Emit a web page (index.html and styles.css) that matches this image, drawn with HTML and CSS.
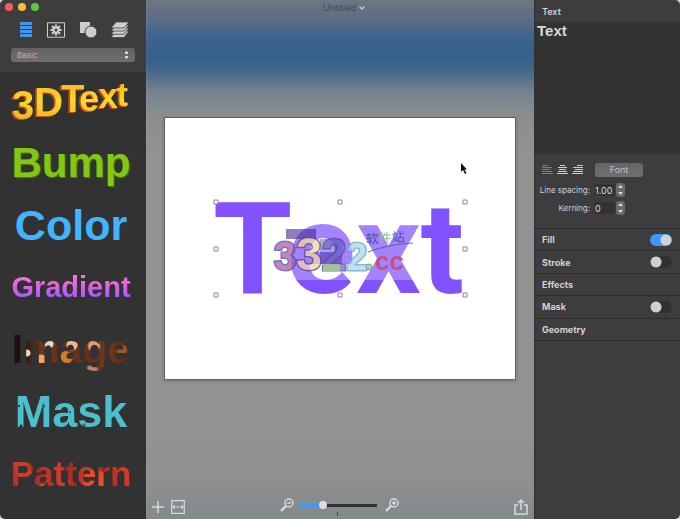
FILE: index.html
```
<!DOCTYPE html>
<html lang="en">
<head>
  <meta charset="UTF-8" />
  <meta name="viewport" content="width=device-width, initial-scale=1.0"/>
  <title>Untitled</title>
  <link rel="stylesheet" href="styles.css">
</head>
<body>
  <div class="window">

    <aside class="sidebar">
      <div class="sidebar-top">
        <div class="lights">
          <button class="light close" aria-label="Close"></button>
          <button class="light minimize" aria-label="Minimize"></button>
          <button class="light full" aria-label="Full screen"></button>
        </div>
        <nav class="tabs">
          <button aria-label="Styles">
            <svg width="14" height="16" viewBox="0 0 14 16" fill="#4496e8"><path d="M1 0h12v3H1zM1 4h12v3H1zM1 8h12v3H1zM1 12h12v3H1z"/></svg>
          </button>
          <button aria-label="Symbols">
            <svg width="18" height="16" viewBox="0 0 18 16" fill="none" stroke="#d0d0d0"><path d="M.5 .8h17v14.4H.5z"/><path stroke-width="2.2" d="M9 2.500v3M9 10.500v3M3.500 8h3M11.500 8h3M5.100 4.100l2.100 2.100M10.800 9.800l2.100 2.100M12.900 4.100l-2.100 2.100M7.200 9.800l-2.100 2.100"/><circle cx="9" cy="8" r="2.500" stroke-width="2"/></svg>
          </button>
          <button aria-label="Shapes">
            <svg width="18" height="16" viewBox="0 0 18 16" fill="#cdcdcd"><path d="M1 0h10v11H1z"/><circle cx="12" cy="10" r="6" stroke="#3d3d3d"/></svg>
          </button>
          <button aria-label="Layers">
            <svg width="18" height="16" viewBox="0 0 18 16" fill="#d0d0d0" stroke="#3d3d3d" stroke-width=".8"><path d="M5 9h13l-5 6.500H0z"/><path d="M5 6h13l-5 6.200H0z"/><path d="M5 3h13l-5 6H0z"/><path d="M5 0h13l-5 6H0z"/></svg>
          </button>
        </nav>
        <select class="category" aria-label="Category">
          <option>Basic</option>
        </select>
      </div>

      <div class="presets">
        <button class="preset">
          <svg width="124" height="60" viewBox="0 0 124 60" aria-label="3DText">
            <defs>
              <linearGradient id="gold" x1="0" y1="0" x2="0" y2="1">
                <stop offset="0" stop-color="#f6a81e"/>
                <stop offset=".5" stop-color="#fcd82b"/>
                <stop offset="1" stop-color="#f9a51d"/>
              </linearGradient>
            </defs>
            <text class="solid" x="3" y="48" fill="url(#gold)"><tspan font-size="40">3</tspan><tspan font-size="40" dy="-3">D</tspan><tspan font-size="38" dx="-2" dy="-4">T</tspan><tspan font-size="36" dx="-5" dy="-1">e</tspan><tspan font-size="35" dx="-1" dy="-3">x</tspan><tspan font-size="34" dx="-1" dy="-2">t</tspan></text>
          </svg>
        </button>
        <button class="preset bump">Bump</button>
        <button class="preset color">Color</button>
        <button class="preset gradient">Gradient</button>
        <button class="preset image">Image</button>
        <button class="preset mask">Mask</button>
        <button class="preset pattern">Pattern</button>
      </div>
    </aside>

    <main class="workspace">
      <header class="title">
        <span>Untitled</span>
        <svg width="6" height="4" viewBox="0 0 6 4" fill="none" stroke="#c3ced8" stroke-width="1.300"><path d="M.5 .5L3 3 5.500 .5"/></svg>
      </header>

      <div class="stage">
        <svg class="canvas" viewBox="0 0 350 261">
          <text class="artwork" x="48" y="175">Text</text>

          <!-- watermark -->
          <path class="haze" d="M126 100h129v62H126z"/>
          <path fill="#3d2b91" opacity=".6" d="M121 111h30v10h-30z"/>
          <path fill="#2c1f9a" opacity=".4" d="M155 121h22v25h-22z"/>
          <text class="digits" x="109" y="152"><tspan font-size="40" fill="#ae5db0">3</tspan><tspan font-size="46" fill="#f3d6a6">3</tspan><tspan font-size="44" fill="#756bd2">2</tspan><tspan font-size="38" stroke="#7398c2" fill="#a2d9ee">2</tspan></text>
          <path fill="#a5cf91" opacity=".8" d="M158 146h17v7h-17z"/>
          <circle cx="204" cy="149" r="3" fill="#a9d6a2" stroke="#8696b0"/>
          <text class="domain" x="210" y="152">cc</text>
          <g transform="rotate(-4 202 126)">
            <text class="hanzi" x="201" y="126">软<tspan fill="#87c58f">件</tspan>站</text>
          </g>
          <path d="M203 134Q224 126 248 125" fill="none" stroke="#46549b" stroke-width=".8"/>

          <g class="handles">
            <path d="M49 82h4v4h-4zM173 82h4v4h-4zM298 82h4v4h-4zM49 129h4v4h-4zM298 129h4v4h-4zM49 175h4v4h-4zM173 175h4v4h-4zM298 175h4v4h-4z"/>
          </g>
          <path d="M296 45v9l2-2 2 4 1.500-.7-2-3.800h2.500z" fill="#111"/>
        </svg>
      </div>

      <footer class="bottom-bar">
        <button aria-label="Add">
          <svg width="12" height="12" viewBox="0 0 12 12"><path d="M6 0v12M0 6h12"/></svg>
        </button>
        <button aria-label="Fit canvas">
          <svg width="14" height="14" viewBox="0 0 14 14"><path stroke-width="1.200" d="M.7 .7h12.600v12.600H.7zM1 7h3M10 7h3M4 5.500L2 7l2 1.500M10 5.500L12 7l-2 1.500M5 7h4"/></svg>
        </button>
        <div class="zoom">
          <button aria-label="Zoom out">
            <svg width="14" height="14" viewBox="0 0 14 14"><circle cx="9" cy="5" r="4"/><path d="M7 5h4"/><path d="M6 8L1 13" stroke-width="2.400"/></svg>
          </button>
          <div class="scale">
            <input type="range" min="0" max="100" value="28" aria-label="Zoom">
            <i class="tick"></i>
          </div>
          <button aria-label="Zoom in">
            <svg width="14" height="14" viewBox="0 0 14 14"><circle cx="9" cy="5" r="4"/><path d="M7 5h4M9 3v4"/><path d="M6 8L1 13" stroke-width="2.400"/></svg>
          </button>
        </div>
        <button aria-label="Share">
          <svg width="14" height="16" viewBox="0 0 14 16"><path d="M4 6H1v9h12V6h-3M7 11V1M4 4l3-3 3 3"/></svg>
        </button>
      </footer>
    </main>

    <aside class="inspector">
      <h1>Text</h1>
      <textarea aria-label="Text content" spellcheck="false">Text</textarea>

      <div class="type">
        <div class="type-row">
          <div class="align">
            <button aria-label="Align left"><svg width="11" height="9" viewBox="0 0 11 9" stroke="#438bd4"><path d="M0 .5h6M0 2.500h10M0 4.500h8M0 6.500h10M0 8.500h11"/></svg></button>
            <button aria-label="Align center"><svg width="11" height="9" viewBox="0 0 11 9" stroke="#ccc"><path d="M3 .5h5M1 2.500h9M2 4.500h7M1 6.500h9M0 8.500h11"/></svg></button>
            <button aria-label="Align right"><svg width="11" height="9" viewBox="0 0 11 9" stroke="#ccc"><path d="M5 .5h6M1 2.500h10M3 4.500h8M1 6.500h10M0 8.500h11"/></svg></button>
          </div>
          <button class="font">Font</button>
        </div>
        <div class="field">
          <label for="spacing">Line spacing:</label>
          <input type="text" id="spacing" value="1.00">
          <button class="stepper" aria-label="Change line spacing"><svg width="9" height="14" viewBox="0 0 9 14"><path d="M2 5l2.500-3L7 5zM2 9l2.500 3L7 9z"/></svg></button>
        </div>
        <div class="field">
          <label for="kerning">Kerning:</label>
          <input type="text" id="kerning" value="0">
          <button class="stepper" aria-label="Change kerning"><svg width="9" height="14" viewBox="0 0 9 14"><path d="M2 5l2.500-3L7 5zM2 9l2.500 3L7 9z"/></svg></button>
        </div>
      </div>

      <div class="sections">
        <div class="section"><label for="fill">Fill</label><input type="checkbox" id="fill" checked></div>
        <div class="section"><label for="stroke">Stroke</label><input type="checkbox" id="stroke"></div>
        <div class="section">Effects</div>
        <div class="section"><label for="mask">Mask</label><input type="checkbox" id="mask"></div>
        <div class="section">Geometry</div>
      </div>
    </aside>

  </div>
</body>
</html>
```
FILE: styles.css
```
* { box-sizing: border-box; }
body {
  margin: 0;
  font-family: Inter, "Liberation Sans", sans-serif;
  font-size: 9px;
  color: #d2d2d2;
  background: #d8d8d8;
}

button {
  padding: 0;
  border: none;
  background: none;
  font: inherit;
  color: inherit;
}

svg { display: block; }

.window {
  display: grid;
  grid-template-columns: 146px 1fr 146px;
  min-height: 100vh;
  border-radius: 5px;
  overflow: hidden;
}

/* Left sidebar */
.sidebar { background: #323232; }

.sidebar-top {
  height: 72px;
  padding: 3px 11px 0;
  background: #3d3d3d;
}

.lights {
  display: flex;
  gap: 5px;
  margin-left: -6px;
}

.light {
  width: 8px;
  height: 8px;
  border-radius: 50%;
}

.close { background: #fc5b57; }
.minimize { background: #fdbc40; }
.full { background: #58cb42; }

.tabs {
  display: flex;
  justify-content: space-between;
  align-items: center;
  height: 16px;
  margin: 11px 6px 10px 8px;
}

.category {
  appearance: none;
  display: block;
  width: 124px;
  height: 14px;
  padding: 0 6px;
  border: none;
  border-radius: 3px;
  background:
    conic-gradient(from 143deg at 50% 0, #d8d8d8 74deg, transparent 0) right 6px top 3px / 5px 3px no-repeat,
    conic-gradient(from -37deg at 50% 100%, #d8d8d8 74deg, transparent 0) right 6px bottom 3px / 5px 3px no-repeat,
    linear-gradient(#626262, #6e6e6e);
  font: 8px/14px Inter, "Liberation Sans", sans-serif;
  color: #b8b8b8;
}

.presets {
  display: grid;
  grid-auto-rows: 62px;
}

.preset {
  display: flex;
  align-items: center;
  justify-content: center;
  padding: 0 4px 4px 0;
  font-family: "Liberation Sans", sans-serif;
  font-weight: bold;
  line-height: 1;
}

.solid {
  font-family: "Liberation Sans", sans-serif;
  font-weight: bold;
  filter: drop-shadow(-1px 1px 0 #c5541b) drop-shadow(-1px 0 0 #a53e18);
}

.bump {
  font-size: 42px;
  color: #82c713;
  text-shadow: 1px 1px 1px #4c8107;
}

.color {
  font-size: 43px;
  color: #42b3ff;
}

.gradient, .image, .mask, .pattern {
  color: transparent;
  background-clip: text;
}

.gradient {
  font-size: 29px;
  background-image: linear-gradient(#f07cd8 27%, #ec62e0 42%, #9a5cff 65%);
}

.image {
  font-size: 41px;
  background-image:
    radial-gradient(circle at 27px 33px, #ded6c1 3px, transparent 4px),
    radial-gradient(circle at 49px 24px, #e4d6c4 4px, transparent 5px),
    radial-gradient(circle at 72px 25px, #f3b498 5px, transparent 6px),
    radial-gradient(circle at 41px 40px, #f8a263 5px, transparent 6px),
    radial-gradient(circle at 65px 38px, #d87931 6px, transparent 8px),
    radial-gradient(circle at 94px 26px, #e89a79 5px, transparent 7px),
    radial-gradient(circle at 92px 51px, #b88475 5px, transparent 7px),
    radial-gradient(circle at 122px 30px, #9c5a2f 4px, transparent 6px),
    linear-gradient(90deg, #1b100e 14%, #6d3519 28%, #63301b 60%, #713819 75%, #2f1b12);
}

.mask {
  font-size: 45px;
  background-image:
    radial-gradient(circle at 19px 24px, #323232 1px, transparent 1px),
    radial-gradient(circle at 21px 44px, #323232 1px, transparent 2px),
    radial-gradient(circle at 44px 24px, #2d6970 1px, transparent 2px),
    radial-gradient(circle at 70px 30px, #2d6970 1px, transparent 1px),
    radial-gradient(circle at 84px 43px, #2d6970 1px, transparent 2px),
    radial-gradient(circle at 115px 37px, #2d6970 1px, transparent 2px),
    linear-gradient(#4bbfcb, #4bbfcb);
}

.pattern {
  font-size: 35px;
  background-image:
    radial-gradient(circle at 30% 80%, #e4552b 9px, transparent 10px),
    radial-gradient(circle at 65% 60%, #e44d28 11px, transparent 12px),
    repeating-linear-gradient(65deg, #d03b29 0 12px, #a92e24 14px 22px, #be3327 24px 30px);
}

/* Workspace */
.workspace {
  display: flex;
  flex-direction: column;
  min-width: 0;
  background:
    linear-gradient(90deg, rgba(255,255,255,0.08), transparent 2px),
    linear-gradient(#6f7582 0, #5b6d84 20px, #3e648e 36px, #365f8c 56px, #436789 70px, #75828e 92px, #8b8e90 116px, #929292 160px, #929292 430px, #8f9091 480px, #83898c 100%);
}

.title {
  display: flex;
  align-items: center;
  justify-content: center;
  gap: 3px;
  height: 15px;
  padding-left: 8px;
  color: #3f4a57;
}

.stage {
  flex: 1;
  padding: 103px 19px 0 19px;
}

.canvas {
  width: 100%;
  height: auto;
  background: #fff;
  box-shadow: 0 0 0 1px #606468, 0 1px 3px 1px rgba(0,0,0,0.25);
}

.artwork {
  font: bold 128px Roboto, sans-serif;
  fill: #8352ff;
}

.haze {
  fill: #fff;
  opacity: 0.28;
}

.digits {
  font-family: "Liberation Sans", sans-serif;
  font-weight: bold;
  stroke: #584c91;
  stroke-width: 3px;
  paint-order: stroke;
  opacity: 0.75;
}

.domain {
  font: bold 26px "Liberation Sans", sans-serif;
  fill: #c15384;
}

.hanzi {
  font: 13px "Noto Sans CJK SC", sans-serif;
  fill: #46549b;
}

.handles {
  fill: #fff;
  stroke: #8c82aa;
  stroke-width: 1px;
}

.bottom-bar {
  display: flex;
  align-items: center;
  gap: 7px;
  height: 25px;
  padding: 0 6px;
}

.bottom-bar svg {
  fill: none;
  stroke: #d8dadb;
  stroke-width: 1.5px;
}

.zoom {
  display: flex;
  align-items: center;
  gap: 4px;
  margin: 0 auto 3px 88px;
}

.scale { position: relative; }

.scale input {
  appearance: none;
  display: block;
  width: 78px;
  height: 8px;
  margin: 0 4px 0 1px;
  background: linear-gradient(90deg, #3d98fb 28%, #333 28%) center / 100% 3px no-repeat;
}

.scale input::-webkit-slider-thumb {
  appearance: none;
  width: 8px;
  height: 8px;
  border-radius: 50%;
  background: #dedede;
}

.tick {
  position: absolute;
  left: 39px;
  top: 11px;
  width: 1px;
  height: 4px;
  background: #444;
}

/* Inspector */
.inspector {
  background: #3d3d3d;
  border-left: 1px solid #303030;
}

.inspector h1 {
  height: 22px;
  margin: 0;
  padding-left: 7px;
  font-size: 9px;
  font-weight: 600;
  line-height: 23px;
}

.inspector textarea {
  display: block;
  width: 100%;
  height: 132px;
  padding: 0 2px;
  border: none;
  resize: none;
  background: #323232;
  color: #d8d8d8;
  font: bold 15px/18px "Liberation Sans", sans-serif;
}

.type {
  height: 74px;
  padding: 8px 7px 0;
}

.type-row {
  display: flex;
  align-items: center;
  height: 15px;
  margin-bottom: 4px;
}

.align {
  display: flex;
  gap: 4px;
}

.font {
  width: 48px;
  height: 14px;
  margin-left: 12px;
  border-radius: 3px;
  background: linear-gradient(#646464, #707070);
  color: #c0c0c0;
}

.field {
  display: flex;
  align-items: center;
  height: 18px;
  margin-left: -2px;
}

.field label {
  display: flex;
  justify-content: flex-end;
  width: 50px;
  font-size: 8px;
  white-space: nowrap;
}

.field input {
  width: 21px;
  height: 12px;
  margin: 0 1px 0 4px;
  padding: 0 1px;
  border: none;
  background: #333;
  color: #ddd;
  font: 9px Inter, "Liberation Sans", sans-serif;
}

.stepper {
  border-radius: 3px;
  background: #696969;
}

.stepper svg { fill: #d8d8d8; }

.sections {
  display: grid;
  grid-template-rows: repeat(5, 1fr);
  height: 113px;
  border-bottom: 1px solid #2c2c2c;
}

.section {
  display: flex;
  align-items: center;
  justify-content: space-between;
  padding: 0 8px 0 7px;
  border-top: 1px solid #2c2c2c;
  font-weight: bold;
}

.section input {
  appearance: none;
  width: 22px;
  height: 12px;
  margin: 0;
  border-radius: 6px;
  background: radial-gradient(circle at 6px 6px, #cfcfcf 5px, transparent 6px) #303030;
}

.section input:checked {
  background: radial-gradient(circle at 16px 6px, #d4d4d4 5px, transparent 6px) #3d98fb;
}
```
